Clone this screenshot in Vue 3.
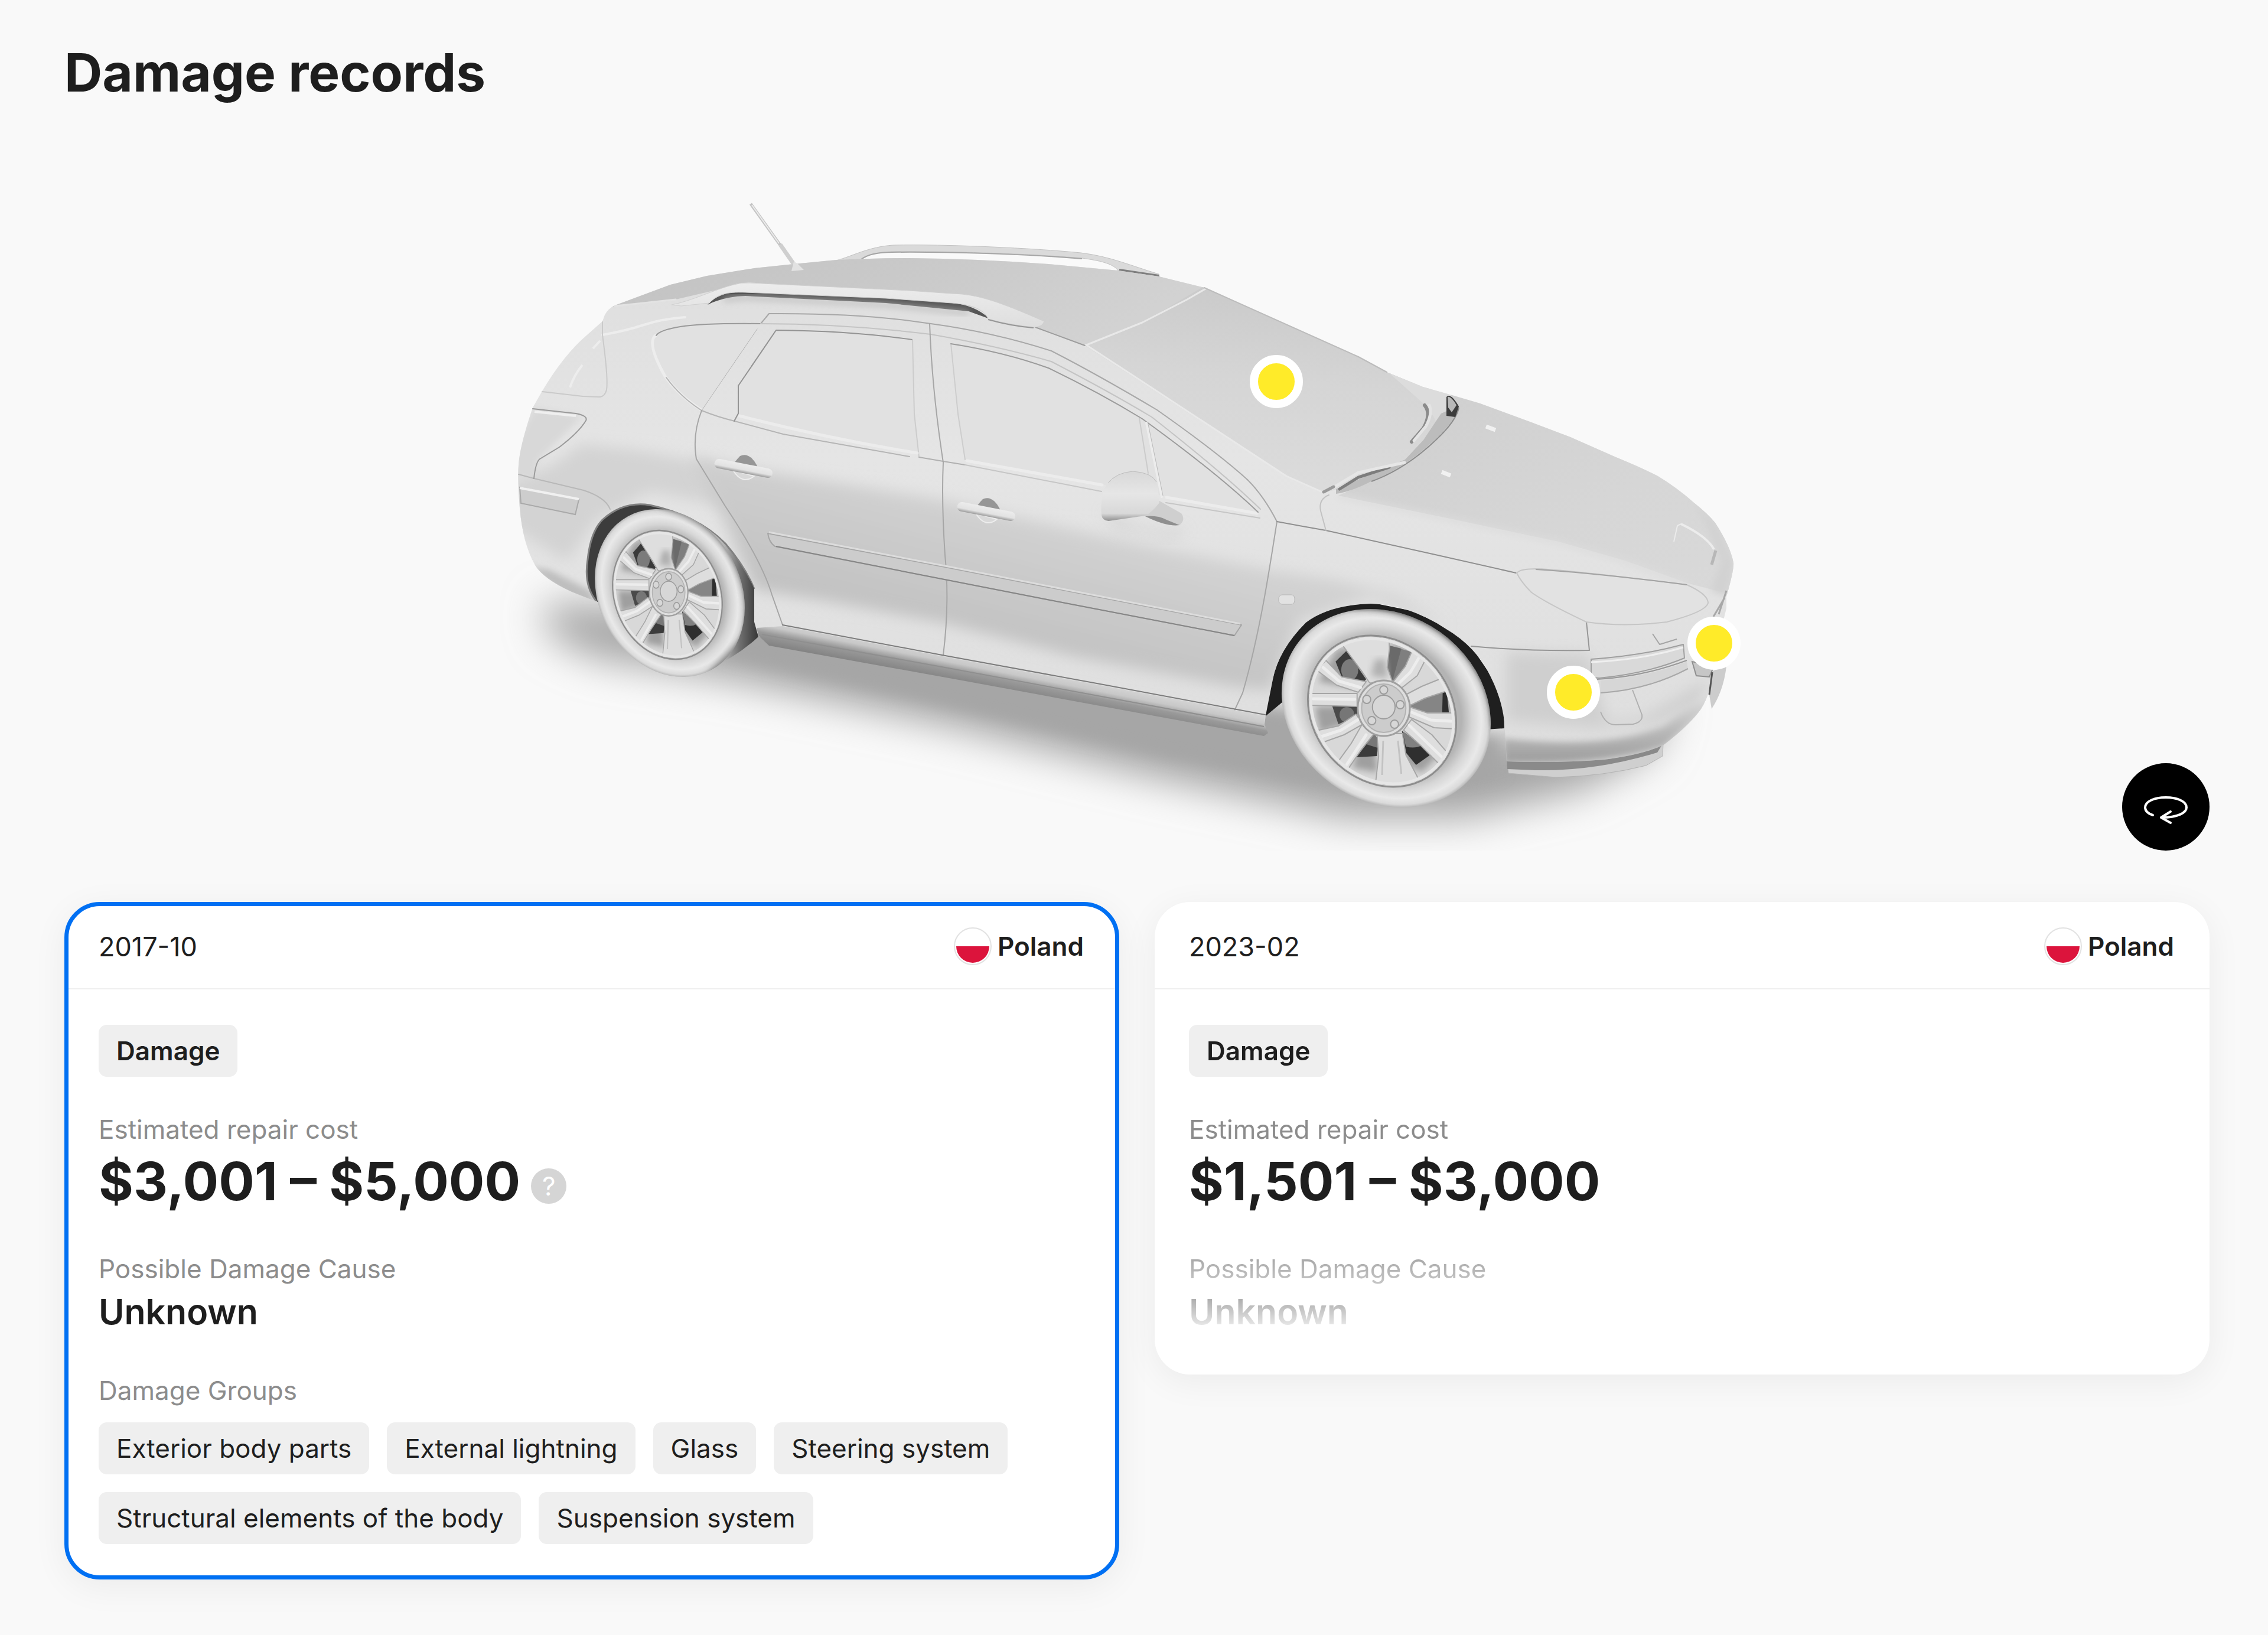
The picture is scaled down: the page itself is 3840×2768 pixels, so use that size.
<template>
  <main class="damage-page">
    <h1 class="title">Damage records</h1>

    <section class="stage" aria-label="Car model">
      <svg class="car" viewBox="109 178 3632 1262" aria-hidden="true">
        <defs>
          <linearGradient id="bodyFill" x1="0" y1="0" x2="0" y2="1">
            <stop offset="0" stop-color="#dedede" />
            <stop offset="0.4" stop-color="#e5e5e5" />
            <stop offset="1" stop-color="#dedede" />
          </linearGradient>
          <linearGradient id="roofFill" x1="0" y1="0" x2="1" y2="0.3">
            <stop offset="0" stop-color="#c2c2c2" />
            <stop offset="0.5" stop-color="#c9c9c9" />
            <stop offset="1" stop-color="#d2d2d2" />
          </linearGradient>
          <linearGradient id="screenFill" x1="0.6" y1="0" x2="0.4" y2="1">
            <stop offset="0" stop-color="#c9c9c9" />
            <stop offset="0.45" stop-color="#d5d5d5" />
            <stop offset="1" stop-color="#dcdcdc" />
          </linearGradient>
          <linearGradient id="hoodFill" x1="0" y1="0" x2="1" y2="1">
            <stop offset="0" stop-color="#cecece" />
            <stop offset="0.6" stop-color="#d6d6d6" />
            <stop offset="1" stop-color="#d9d9d9" />
          </linearGradient>
          <linearGradient id="sideFill" gradientUnits="userSpaceOnUse" x1="1700" y1="860" x2="1640" y2="1090">
            <stop offset="0" stop-color="#d2d2d2" />
            <stop offset="0.4" stop-color="#cbcbcb" />
            <stop offset="1" stop-color="#c1c1c1" />
          </linearGradient>
          <linearGradient id="sillFill" gradientUnits="userSpaceOnUse" x1="1700" y1="1122" x2="1691" y2="1168">
            <stop offset="0" stop-color="#d8d8d8" />
            <stop offset="0.35" stop-color="#c8c8c8" />
            <stop offset="0.6" stop-color="#9a9a9a" />
            <stop offset="1" stop-color="#838383" />
          </linearGradient>
          <linearGradient id="lipFill" x1="0" y1="0" x2="0" y2="1">
            <stop offset="0" stop-color="#e2e2e2" />
            <stop offset="0.5" stop-color="#bcbcbc" />
            <stop offset="1" stop-color="#9c9c9c" />
          </linearGradient>
          <linearGradient id="mirrorFill" x1="0" y1="0" x2="0" y2="1">
            <stop offset="0" stop-color="#d8d8d8" />
            <stop offset="0.45" stop-color="#e6e6e6" />
            <stop offset="0.85" stop-color="#d8d8d8" />
            <stop offset="1" stop-color="#8f8f8f" />
          </linearGradient>
          <linearGradient id="railFill" x1="0" y1="0" x2="0" y2="1">
            <stop offset="0" stop-color="#ededed" />
            <stop offset="1" stop-color="#dedede" />
          </linearGradient>
          <linearGradient id="handleFill" x1="0" y1="0" x2="0" y2="1">
            <stop offset="0" stop-color="#ececec" />
            <stop offset="0.65" stop-color="#e2e2e2" />
            <stop offset="1" stop-color="#9a9a9a" />
          </linearGradient>
          <linearGradient id="tread" gradientUnits="userSpaceOnUse" x1="1225" y1="0" x2="1282" y2="0">
            <stop offset="0" stop-color="#b5b5b5" />
            <stop offset="0.5" stop-color="#6e6e6e" />
            <stop offset="1" stop-color="#3a3a3a" />
          </linearGradient>
          <radialGradient id="tyre">
            <stop offset="0.72" stop-color="#b4b4b4" />
            <stop offset="0.82" stop-color="#d6d6d6" />
            <stop offset="0.91" stop-color="#e9e9e9" />
            <stop offset="0.97" stop-color="#dadada" />
            <stop offset="1" stop-color="#b8b8b8" />
          </radialGradient>
          <filter id="soft6" x="-20%" y="-20%" width="140%" height="140%">
            <feGaussianBlur stdDeviation="6" />
          </filter>
          <filter id="soft12" x="-20%" y="-20%" width="140%" height="140%">
            <feGaussianBlur stdDeviation="12" />
          </filter>
          <filter id="soft34" x="-20%" y="-40%" width="140%" height="180%">
            <feGaussianBlur stdDeviation="34" />
          </filter>
          <clipPath id="bodyClip">
            <path :d="bodyPath" />
          </clipPath>
          <clipPath id="rimClip">
            <ellipse rx="137" ry="117" transform="rotate(41)" />
          </clipPath>
          <clipPath id="frontTyreClip">
            <ellipse cx="2347" cy="1199" rx="186" ry="158" transform="rotate(35.5 2347 1199)" />
          </clipPath>
          <clipPath id="rearTyreClip">
            <ellipse cx="1134" cy="1004" rx="148" ry="120" transform="rotate(61.5 1134 1004)" />
          </clipPath>

          <!-- ten spoke rim, centred on 0 0 -->
          <g id="rim">
            <ellipse rx="139" ry="119" transform="rotate(41)" fill="#d8d8d8" stroke="#8d8d8d" stroke-width="3" />
            <g clip-path="url(#rimClip)">
              <g filter="url(#soft6)" fill="#9f9f9f">
                <path d="M-112 -50 L-80 -104 L-50 -110 L-30 -50 L-50 -40Z" />
                <path d="M14 -116 L66 -96 L40 -50 L14 -50Z" />
                <path d="M100 -46 L122 -30 L124 4 L60 4 L46 -18Z" />
                <path d="M36 36 L100 74 L70 104 L40 90Z" />
                <path d="M-14 44 L-8 104 L-52 96 L-44 66Z" />
                <path d="M-118 -8 L-44 -8 L-46 16 L-110 36Z" />
              </g>
              <path d="M-82 -84 L-63 -102 L-28 -54 L-35 -47 L-71 -58Z" fill="#3a3a3a" />
              <ellipse cx="-57" cy="-70" rx="15" ry="18" fill="#7b7b7b" />
              <path d="M13 -111 L57 -99 L41 -74 L22 -46 L8 -61Z" fill="#7f7f7f" />
              <path d="M13 -111 L34 -106 L18 -50 L8 -61Z" fill="#6a6a6a" />
              <path d="M107 -34 L116 3 L80 5 L48 -9Z" fill="#858585" />
              <path d="M107 -34 L114 -34 L118 4 L106 4Z" fill="#2e2e2e" />
              <path d="M35 33 L88 72 L60 91 L42 70Z" fill="#2f2f2f" />
              <path d="M36 34 L70 58 Q58 64 42 60Z" fill="#808080" />
              <path d="M-14 38 L-6 50 L-9 76 L-45 78Z" fill="#3b3b3b" />
              <path d="M-15 38 L-6 48 L-8 62 L-28 56Z" fill="#787878" />
              <path d="M-88 -9 L-42 -9 L-44 8 L-77 22Z" fill="#4a4a4a" />
              <ellipse cx="-62" cy="6" rx="13" ry="13" fill="#767676" />

              <g fill="#dedede" stroke="#a6a6a6" stroke-width="2" stroke-linejoin="round">
                <path d="M-70 -112 L-58 -122 L12 -126 L13 -106 L9 -74 L20 -46 L-22 -48 L-36 -68Z" />
                <path d="M53 -102 L78 -90 L62 -60 L30 -36 L18 -48 L41 -76Z" />
                <path d="M106 -56 L114 -34 L76 -22 L50 -10 L42 -28 L70 -42Z" />
                <path d="M46 -8 L80 3 L128 3 L130 30 L92 28 L48 10Z" />
                <path d="M52 14 L88 40 L122 78 L99 88 L68 58 L38 32Z" />
                <path d="M-9 38 L36 38 L42 74 L66 118 L-12 126 L-6 76Z" />
                <path d="M-35 22 L-14 38 L-38 67 L-60 98 L-78 86 L-54 54Z" />
                <path d="M-46 5 L-34 22 L-67 40 L-108 54 L-116 33 L-77 25Z" />
                <path d="M-44 -30 L-44 -8 L-126 -10 L-132 -30Z" />
                <path d="M-28 -50 L-42 -32 L-80 -44 L-116 -70 L-99 -86 L-71 -58Z" />
              </g>
              <g fill="none" stroke="#ededed" stroke-width="5" stroke-linecap="round">
                <path d="M-104 -74 L-76 -51 L-38 -40" />
                <path d="M-122 -21 L-48 -20" />
                <path d="M-110 44 L-72 32 L-42 14" />
                <path d="M122 17 L86 15 L50 1" />
                <path d="M108 80 L48 24" />
                <path d="M66 -92 L50 -66 L26 -44" />
                <path d="M-62 90 L-28 40" />
              </g>
              <path d="M-20 -60 L-12 -88 L6 -88 L10 -56Z" fill="#b0b0b0" filter="url(#soft6)" />
              <path d="M2 50 L0 108 M28 50 L34 106" fill="none" stroke="#c2c2c2" stroke-width="3" />
              <ellipse rx="134" ry="114" transform="rotate(41)" fill="none" stroke="#e6e6e6" stroke-width="5" />
            </g>
            <ellipse cx="3" cy="-5" rx="46" ry="47" fill="#dedede" stroke="#a0a0a0" stroke-width="3" />
            <ellipse cx="3" cy="-5" rx="39" ry="41" fill="#cccccc" stroke="#b2b2b2" stroke-width="2" />
            <g fill="#d7d7d7" stroke="#9c9c9c" stroke-width="2">
              <ellipse cx="3" cy="-7" rx="20" ry="20" />
              <circle cx="3" cy="-36" r="7" />
              <circle cx="32" cy="-11" r="7" />
              <circle cx="22" cy="22" r="7" />
              <circle cx="-18" cy="16" r="7" />
              <circle cx="-27" cy="-20" r="7" />
            </g>
          </g>
        </defs>

        <!-- ground shadow -->
        <path
          d="M920 1020 L1290 1040 L2140 1200 L2550 1250 L2830 1180 L2800 1270 L2680 1336 L2480 1384 L2280 1384 L1960 1316 L1600 1226 L1240 1150 L1010 1114 L930 1076Z"
          fill="#a3a3a3"
          filter="url(#soft34)"
        />
        <path
          d="M1240 1050 L2150 1200 L2540 1250 L2540 1310 L2330 1340 L1980 1280 L1560 1184 L1230 1110Z"
          fill="#a6a6a6"
          filter="url(#soft12)"
        />

        <!-- wheel wells -->
        <path d="M1011 1019 L990 990 L994 940 L1008 890 L1044 860 L1095 852 L1140 860 L1200 890 L1240 930 L1277 997 L1200 1040 L1060 1000Z" fill="#3c3c3c" />
        <path d="M2142 1213 L2148 1150 L2178 1090 L2212 1050 L2260 1026 L2321 1020 L2390 1034 L2450 1062 L2492 1096 L2526 1146 L2546 1200 L2547 1233 L2500 1236 L2300 1150 L2172 1188Z" fill="#1f1f1f" />

        <!-- far rail and aerial -->
        <path d="M1416 441 C1445 433 1470 418 1512 415 C1600 413 1750 420 1830 428 C1880 434 1915 450 1962 464 L1964 470 L1893 458 C1885 446 1860 441 1832 437 C1740 429 1600 425 1510 426 C1490 427 1470 430 1458 440Z" fill="#dadada" stroke="#c2c2c2" stroke-width="1" />
        <path d="M1458 439 C1470 430 1490 427 1510 427 C1600 426 1740 430 1832 438" fill="none" stroke="#a5a5a5" stroke-width="2" />
        <path d="M1895 457 L1962 467" stroke="#7f7f7f" stroke-width="4" />
        <path d="M1271 345 L1321 415" stroke="#c4c4c4" stroke-width="5" />
        <path d="M1273 347 L1319 412" stroke="#ececec" stroke-width="2" />
        <path d="M1321 414 L1346 450" stroke="#cfcfcf" stroke-width="7" />

        <!-- lower front lip -->
        <path d="M2551 1285 L2700 1285 L2816 1258 L2815 1280 L2787 1296 Q2716 1314 2634 1316 L2554 1309Z" fill="#cfcfcf" stroke="#b3b3b3" stroke-width="1" />
        <path d="M2551 1286 Q2720 1296 2816 1258 L2806 1274 Q2700 1306 2600 1304 L2552 1302Z" fill="#8a8a8a" />

        <path :d="bodyPath" fill="url(#bodyFill)" />
        <g clip-path="url(#bodyClip)">
          <!-- side panel shading -->
          <path d="M930 790 L985 752 L1080 762 L1200 784 L1240 860 L1100 832 L1010 880 L960 950 L860 890 L860 815Z" fill="#d3d3d3" filter="url(#soft12)" />
          <path
            d="M1170 774 L1309 800 L1595 846 L1912 918 L2149 965 L2260 982 L2368 1010 L2450 1060 L2320 1010 L2200 1050 L2150 1168 L2091 1162 L1823 1112 L1595 1054 L1401 1018 L1279 998 L1225 880Z"
            fill="url(#sideFill)"
            filter="url(#soft12)"
          />
          <path d="M870 760 L905 690 L985 705 L910 780 L904 812 L870 806Z" fill="#d8d8d8" filter="url(#soft6)" />
          <path d="M895 960 L960 1010 L1012 1030 L1000 1000 L930 965Z" fill="#bdbdbd" filter="url(#soft6)" />

          <!-- roof, windscreen, bonnet -->
          <path d="M1030 520 L1135 478 L1277 448 L1416 434 L1600 430 L1893 450 L2043 484 L1934 546 L1837 585 L1753 554 L1600 505 L1268 478 L1144 507 L1041 519Z" fill="url(#roofFill)" />
          <path d="M2040 484 L2300 600 L2420 655 L2455 700 L2400 775 L2330 812 L2241 834 L2178 807 L2010 698 L1934 648 L1837 585 L1934 546Z" fill="url(#screenFill)" />
          <path d="M2348 628 L2420 692 L2445 740 L2470 690 L2450 664 L2409 652Z" fill="#dcdcdc" />
          <path d="M2455 664 L2600 712 L2740 770 L2810 802 L2872 850 L2908 885 L2940 955 L2925 1005 L2856 987 L2751 949 L2639 917 L2455 878 L2266 839 L2340 806 L2400 765 L2440 730 L2466 700Z" fill="url(#hoodFill)" />
          <path d="M2266 840 L2455 879 L2639 918 L2751 950 L2860 990" fill="none" stroke="#dcdcdc" stroke-width="8" filter="url(#soft6)" />
          <path d="M2868 851 L2904 885 L2935 953 L2923 1010 L2896 1000 L2915 950 L2890 890Z" fill="#d2d2d2" filter="url(#soft6)" />
          <path d="M2470 687 Q2474 700 2432 742 Q2379 792 2327 812 Q2290 832 2262 836 L2262 828 L2379 778 L2410 745 L2440 700Z" fill="#bcbcbc" />
          <path d="M2470 690 Q2466 712 2432 744 Q2380 794 2322 815" fill="none" stroke="#8c8c8c" stroke-width="2" />

          <!-- front bumper -->
          <path d="M2551 1104 L2690 1108 L2708 1175 L2720 1222 L2780 1216 L2890 1150 L2880 1190 L2800 1226 L2700 1232 L2551 1220Z" fill="#cfcfcf" filter="url(#soft12)" />
          <path d="M2545 1250 Q2716 1270 2816 1230 L2895 1170 L2890 1200 L2817 1264 Q2716 1296 2545 1292Z" fill="url(#lipFill)" filter="url(#soft6)" />
        </g>

        <!-- roof edges -->
        <g fill="none" stroke-linecap="round" stroke-linejoin="round">
          <path d="M2041 489 L2010 507 L1934 546 L1837 585" stroke="#e8e8e8" stroke-width="3" />
          <path d="M1753 554 L1837 585" stroke="#9d9d9d" stroke-width="2" />
          <path d="M1839 584 L1934 646 L2010 696 L2178 806 L2241 834" stroke="#e9e9e9" stroke-width="3" />
          <path d="M1041 518 L1080 514 L1144 507" stroke="#e3e3e3" stroke-width="3" />
          <path d="M2039 487 L2300 604 L2348 630" stroke="#bcbcbc" stroke-width="2" />
          <path d="M1020 567 Q1060 560 1090 550 T1160 537" stroke="#ededed" stroke-width="4" />
        </g>
        <path d="M1340 459 L1344 443 L1350 446 L1361 457Z" fill="#e2e2e2" />

        <!-- near rail -->
        <path d="M1198 516 Q1215 495 1262 492 L1500 504 L1612 513 Q1650 516 1676 540 L1640 527 L1500 513 L1262 501 Q1225 502 1198 516Z" fill="#555555" />
        <path d="M1225 508 L1262 504 L1500 516 L1640 530" fill="none" stroke="#b9b9b9" stroke-width="6" filter="url(#soft6)" />
        <path d="M1137 516 C1170 510 1210 490 1242 482 Q1255 478 1270 479 L1540 492 L1612 497 C1655 498 1690 510 1768 544 Q1765 554 1750 554 Q1710 550 1673 540 C1668 526 1650 516 1612 513 L1500 505 L1262 495 C1230 494 1215 498 1201 513 L1153 518Z" fill="url(#railFill)" stroke="#cfcfcf" stroke-width="1" />
        <path d="M1673 541 Q1712 552 1750 555" fill="none" stroke="#969696" stroke-width="2" />

        <!-- side glass -->
        <g fill="#e1e1e1" stroke-linejoin="round">
          <path d="M1110 568 Q1113 560 1152 553 Q1190 547 1288 549 L1188 695 Q1150 670 1126 637 Q1090 580 1110 568Z" />
          <path d="M1314 559 Q1440 560 1545 575 L1548 701 L1554 766 Q1400 740 1250 703 L1250 653Z" />
          <path d="M1610 582 Q1700 596 1775 623 Q1860 664 1934 709 Q2060 800 2130 867 L1969 839 L1635 778 L1622 701Z" />
        </g>
        <g fill="none" stroke-linecap="round" stroke-linejoin="round">
          <path d="M1110 568 Q1094 580 1126 637 Q1150 670 1186 693" stroke="#ededed" stroke-width="5" />
          <path d="M1111 568 Q1116 559 1152 553 Q1190 547 1288 548" stroke="#9a9a9a" stroke-width="2" />
          <path d="M1128 639 Q1152 672 1188 695 Q1215 706 1244 713 L1326 735 L1540 773" stroke="#b5b5b5" stroke-width="2" />
          <path d="M1288 548 L1302 531 Q1440 530 1540 543 L1576 548 Q1680 562 1780 594 Q1860 635 1959 694 Q2060 765 2112 812 Q2140 840 2162 883" stroke="#a8a8a8" stroke-width="2" />
          <path d="M1288 548 Q1430 548 1576 566 Q1690 586 1780 612 Q1880 664 1950 706 Q2070 800 2134 862" stroke="#c4c4c4" stroke-width="2" />
          <path d="M1188 695 L1282 557" stroke="#b3b3b3" stroke-width="1" />
          <path d="M1243 713 L1250 700 L1250 653 L1314 559 Q1440 560 1545 575" stroke="#939393" stroke-width="2" />
          <path d="M1545 575 L1548 701 L1556 774" stroke="#cccccc" stroke-width="2" />
          <path d="M1556 774 L1597 781 L1634 787" stroke="#b0b0b0" stroke-width="2" />
          <path d="M1252 704 Q1400 742 1553 767" stroke="#ececec" stroke-width="5" />
          <path d="M1637 780 L1866 821 M1975 842 L2128 869" stroke="#ececec" stroke-width="5" />
          <path d="M1634 787 L1865 832 M1974 851 L2133 877" stroke="#c6c6c6" stroke-width="2" />
          <path d="M1610 582 L1622 701 L1634 778" stroke="#cdcdcd" stroke-width="2" />
          <path d="M1610 582 Q1700 596 1775 623 Q1860 664 1934 709 Q2060 800 2130 867" stroke="#9b9b9b" stroke-width="2" />
          <path d="M1929 708 L1944 801" stroke="#cbcbcb" stroke-width="2" />
          <path d="M1941 716 L1967 841" stroke="#ececec" stroke-width="4" />
          <path d="M1944 718 L1969 839" stroke="#bababa" stroke-width="1" />
        </g>

        <!-- panel gaps -->
        <g fill="none" stroke="#a6a6a6" stroke-width="2" stroke-linecap="round" stroke-linejoin="round">
          <path d="M1188 695 Q1172 735 1179 777 L1228 857 Q1290 950 1307 1007 L1325 1058" />
          <path d="M1574 548 Q1578 660 1597 783 Q1594 850 1600 940 Q1608 1020 1597 1109" />
          <path d="M2162 883 Q2150 960 2142 1005 Q2125 1100 2104 1173 L2090 1203" />
          <path d="M2162 883 L2200 890 L2245 898 L2430 939 L2567 970" stroke="#8f8f8f" />
          <path d="M2250 838 Q2232 845 2236 865 L2245 898" stroke="#c2c2c2" />
          <path d="M1325 1058 L1595 1109 L1868 1159 L2142 1210" stroke="#7c7c7c" />
          <path d="M2491 1094 Q2588 1103 2691 1101 L2686 1053" stroke="#969696" />
          <path d="M878 803 L904 810 L988 830 Q1025 842 1033 862" stroke="#b8b8b8" />
          <path d="M1020 545 L1020 567 Q1030 640 1027 660 Q1024 672 1014 672 L987 671 L918 663" stroke="#cacaca" />
          <path d="M902 692 L975 700 Q996 704 992 712 Q980 732 947 757 L914 777 Q907 782 904 810" stroke="#9a9a9a" />
        </g>
        <path d="M905 697 L975 704" stroke="#efefef" stroke-width="4" />
        <path d="M965 656 Q972 635 986 618 M1004 590 L1016 577" fill="none" stroke="#ededed" stroke-width="4" />
        <path d="M880 825 L980 846 L974 871 L882 852Z" fill="#cdcdcd" stroke="#a9a9a9" stroke-width="2" />
        <path d="M880 826 L980 845" stroke="#f0f0f0" stroke-width="4" />

        <!-- sill -->
        <path d="M1281 1063 L1325 1060 L1595 1111 L1868 1161 L2142 1212 L2141 1226 L2147 1241 L2140 1246 L1640 1154 L1302 1093 L1284 1076Z" fill="url(#sillFill)" />
        <path d="M1290 1074 L1600 1130 L2140 1230" fill="none" stroke="#8f8f8f" stroke-width="2" />

        <!-- door moulding -->
        <path d="M1300 903 L1600 960 L2102 1058 L2090 1076 L1778 1016 L1312 925 Q1302 918 1300 903Z" fill="#cccccc" stroke="#a6a6a6" stroke-width="2" stroke-linejoin="round" />
        <path d="M1302 901 L1600 958 L2100 1056" fill="none" stroke="#dcdcdc" stroke-width="3" />
        <path d="M1314 925 L1778 1016 L2090 1076" fill="none" stroke="#868686" stroke-width="2" />
        <rect x="2165" y="1007" width="27" height="16" rx="6" fill="#e2e2e2" stroke="#b4b4b4" stroke-width="1" />

        <!-- handles -->
        <g v-for="handle in handles" :key="handle.x" :transform="`translate(${handle.x} ${handle.y})`">
          <path d="M-20 0 Q-16 -10 -6 -20 Q4 -25 14 -16 Q24 -6 26 8Z" fill="#969696" />
          <path d="M-18 4 Q-2 30 18 14Z" fill="#d9d9d9" stroke="#ededed" stroke-width="2" />
          <rect x="-50" y="-7" width="100" height="16" rx="8" fill="url(#handleFill)" transform="rotate(11)" />
        </g>

        <!-- door mirror -->
        <path d="M1865 860 Q1930 910 2010 895 L1990 912 L1890 896Z" fill="#c8c8c8" filter="url(#soft12)" opacity="0.6" />
        <path d="M1930 852 L1963 848 L2000 869 Q2008 880 1997 889 Q1975 892 1939 874Z" fill="#cfcfcf" />
        <path d="M1939 874 Q1960 872 1975 880 L1997 889 Q1975 892 1939 874Z" fill="#8f8f8f" />
        <path d="M1865 872 Q1862 835 1876 818 Q1890 800 1918 798 Q1950 800 1958 816 Q1962 835 1963 851 Q1950 868 1939 873 L1877 882 Q1866 881 1865 872Z" fill="url(#mirrorFill)" />
        <path d="M1876 818 Q1890 800 1918 798 Q1950 800 1958 816" fill="none" stroke="#bdbdbd" stroke-width="1" />

        <!-- wipers and far mirror -->
        <g fill="none" stroke-linecap="round">
          <path d="M2268 828 L2300 808 L2352 791" stroke="#7d7d7d" stroke-width="5" />
          <path d="M2260 824 L2300 800 L2378 783" stroke="#e6e6e6" stroke-width="5" />
          <path d="M2241 833 L2258 824" stroke="#9a9a9a" stroke-width="5" />
          <path d="M2412 686 Q2424 700 2410 725 L2390 748" stroke="#8b8b8b" stroke-width="6" />
          <path d="M2420 686 Q2426 700 2414 722 L2394 746" stroke="#e4e4e4" stroke-width="5" />
        </g>
        <path d="M2449 672 Q2456 664 2470 688 L2464 706 L2449 704Z" fill="#3b3b3b" />
        <path d="M2451 672 Q2457 670 2466 686 L2458 698 L2452 690Z" fill="#b8b8b8" />
        <path d="M2516 722 L2532 728 M2441 799 L2456 805" stroke="#f1f1f1" stroke-width="7" />

        <!-- headlamp, badge, grille -->
        <g fill="none" stroke="#c6c6c6" stroke-width="2" stroke-linejoin="round">
          <path d="M2568 970 Q2574 963 2600 963 Q2640 963 2856 990 Q2892 1006 2892 1021 Q2888 1036 2822 1053 Q2750 1062 2686 1053 Q2620 1022 2593 1003 Q2575 985 2568 970Z" fill="#e2e2e2" />
          <path d="M2600 964 Q2700 970 2856 990" stroke="#a3a3a3" />
          <path d="M2834 917 L2840 890 L2846 887" stroke="#ebebeb" />
          <path d="M2846 887 Q2890 908 2902 930" stroke="#ececec" stroke-width="4" />
          <path d="M2905 932 L2898 956" stroke="#b7b7b7" stroke-width="5" />
          <path d="M2694 1116 Q2780 1110 2850 1091 L2852 1114 Q2790 1140 2708 1148 L2694 1147Z" fill="#d9d9d9" stroke="#9f9f9f" />
          <path d="M2694 1121 Q2780 1117 2850 1096" stroke="#efefef" stroke-width="3" />
          <path d="M2710 1152 Q2790 1146 2856 1120 L2858 1132 Q2790 1166 2710 1173Z" fill="#d6d6d6" stroke="none" />
          <path d="M2710 1173 Q2790 1168 2858 1132" stroke="#a8a8a8" />
          <path d="M2704 1150 Q2780 1146 2856 1118" stroke="#999999" />
          <path d="M2710 1205 Q2718 1227 2735 1227 L2765 1226 Q2782 1222 2780 1210 L2764 1168" stroke="#b0b0b0" />
          <path d="M2798 1073 L2810 1091 L2839 1082" stroke="#a5a5a5" />
        </g>
        <path d="M2910 1040 L2923 1000 M2901 1044 L2920 1012" stroke="#a8a8a8" stroke-width="3" />
        <path d="M2865 1120 L2872 1144 L2894 1146 L2902 1128Z" fill="#c6c6c6" stroke="#8f8f8f" stroke-width="2" />
        <path d="M2899 1136 L2894 1176 L2898 1200 Q2918 1170 2923 1128Z" fill="#cccccc" />
        <path d="M2899 1138 L2894 1176" stroke="#555555" stroke-width="3" />

        <!-- arch lips -->
        <path d="M1009 1017 Q988 990 995 947 Q1000 900 1020 880 Q1055 848 1100 855 Q1180 872 1228 920 Q1262 960 1277 997" fill="none" stroke="#808080" stroke-width="3" />

        <!-- rear wheel -->
        <path d="M1110 862 Q1180 870 1228 922 Q1262 962 1277 997 L1277 1053 L1284 1078 Q1250 1110 1202 1132 L1149 1144Z" fill="url(#tread)" />
        <ellipse cx="1134" cy="1004" rx="148" ry="120" transform="rotate(61.5 1134 1004)" fill="url(#tyre)" />
        <g clip-path="url(#rearTyreClip)">
          <path d="M1120 850 Q1212 878 1244 940 Q1282 1010 1268 1080 L1206 1144" fill="none" stroke="#868686" stroke-width="16" filter="url(#soft6)" />
        </g>
        <use href="#rim" transform="translate(1130 1007) scale(0.71 0.852)" />

        <!-- front wheel -->
        <ellipse cx="2347" cy="1199" rx="186" ry="158" transform="rotate(35.5 2347 1199)" fill="url(#tyre)" />
        <g clip-path="url(#frontTyreClip)">
          <path d="M2290 1020 Q2402 1018 2474 1088 Q2534 1150 2536 1230" fill="none" stroke="#4a4a4a" stroke-width="18" filter="url(#soft6)" />
        </g>
        <use href="#rim" transform="translate(2340 1204) scale(0.96 1)" />
      </svg>

      <button
        v-for="pin in pins"
        :key="pin.label"
        class="pin"
        type="button"
        :aria-label="pin.label"
        :style="{ left: pin.left + '%', top: pin.top + '%' }"
      ></button>

      <button class="rotate" type="button" aria-label="Rotate car">
        <svg viewBox="0 0 148 148" fill="none" stroke="#fff" stroke-width="4" stroke-linecap="round" stroke-linejoin="round">
          <path d="M52 88 C43 85 39 80 39 75 C39 65 54 58 74 58 C94 58 109 65 109 75 C109 84 94 92 67 92" />
          <path d="M82 82 L66 92 L82 101" />
        </svg>
      </button>
    </section>

    <section class="cards">
      <article
        v-for="(record, index) in records"
        :key="record.date"
        class="card"
        :class="{ active: index === selected, collapsed: index !== selected }"
        @click="selected = index"
      >
        <header class="card-header">
          <time class="date">{{ record.date }}</time>
          <span class="country">
            <span class="flag"><span class="flag-inner"></span></span>
            {{ record.country }}
          </span>
        </header>
        <div class="card-body">
          <span class="tag tag-strong">{{ record.type }}</span>
          <div class="field">
            <p class="label">Estimated repair cost</p>
            <p class="cost">
              {{ record.cost }}
              <button v-if="index === selected" class="help" type="button" aria-label="About repair cost">?</button>
            </p>
          </div>
          <div class="field">
            <p class="label">Possible Damage Cause</p>
            <p class="cause">{{ record.cause }}</p>
          </div>
          <div v-if="record.groups.length" class="field">
            <p class="label">Damage Groups</p>
            <ul class="groups">
              <li v-for="group in record.groups" :key="group" class="tag">{{ group }}</li>
            </ul>
          </div>
        </div>
      </article>
    </section>
  </main>
</template>

<script setup>
import { ref } from 'vue';

const selected = ref(0);

// car outline with both wheel arches cut out
const bodyPath =
  'M1020 544 L1024 533 Q1030 522 1041 517 L1135 482 L1197 467 L1277 454 L1344 447 L1416 440 Q1480 437 1540 437 ' +
  'Q1653 438 1775 447 L1893 458 L1962 468 L2039 487 L2300 604 L2348 630 L2409 655 L2455 668 L2506 683 L2593 715 ' +
  'L2659 740 L2736 774 Q2780 792 2807 806 Q2840 826 2868 851 Q2892 870 2904 885 Q2930 925 2935 953 ' +
  'Q2936 965 2923 1010 L2923 1030 L2918 1050 L2900 1130 L2892 1175 Q2885 1195 2875 1207 Q2855 1232 2817 1261 ' +
  'Q2780 1278 2716 1286 Q2640 1292 2551 1289 L2548 1234 Q2546 1190 2524 1146 Q2500 1095 2447 1064 ' +
  'Q2387 1024 2321 1022 Q2250 1024 2211 1054 Q2165 1100 2155 1150 L2143 1211 L2141 1226 L1640 1140 L1302 1085 ' +
  'L1284 1077 L1277 1053 L1277 997 Q1262 960 1228 920 Q1180 872 1100 855 Q1055 848 1020 880 Q1000 900 995 947 ' +
  'Q988 990 1011 1019 L968 1002 Q920 980 906 957 Q885 920 880 860 Q876 810 878 787 Q880 755 902 690 L918 662 ' +
  'Q955 600 994 567Z';

const handles = [
  { x: 1259, y: 792 },
  { x: 1670, y: 865 },
];

const pins = [
  { label: 'Glass', left: 56.5, top: 37.1 },
  { label: 'Front bumper', left: 76.9, top: 72.2 },
  { label: 'External lightning', left: 70.35, top: 78.8 },
];

const records = [
  {
    date: '2017-10',
    country: 'Poland',
    type: 'Damage',
    cost: '$3,001 – $5,000',
    cause: 'Unknown',
    groups: [
      'Exterior body parts',
      'External lightning',
      'Glass',
      'Steering system',
      'Structural elements of the body',
      'Suspension system',
    ],
  },
  {
    date: '2023-02',
    country: 'Poland',
    type: 'Damage',
    cost: '$1,501 – $3,000',
    cause: 'Unknown',
    groups: [],
  },
];
</script>

<style>
body {
  background: #f9f9f9;
}
</style>

<style scoped>
.damage-page {
  box-sizing: border-box;
  padding: 68px 99px 94px 109px;
  font-family: Inter, 'Liberation Sans', sans-serif;
  font-size: 44px;
  color: #1e1e1e;
}

.title {
  margin: 0;
  font-size: 89px;
  line-height: 110px;
  font-weight: 700;
}

/* car viewer */
.stage {
  position: relative;
}

.car {
  display: block;
  width: 100%;
}

.pin {
  position: absolute;
  box-sizing: border-box;
  width: 90px;
  height: 90px;
  padding: 0;
  border: 14px solid #fff;
  border-radius: 50%;
  background: #ffeb29;
  transform: translate(-50%, -50%);
  cursor: pointer;
}

.rotate {
  position: absolute;
  right: 0;
  bottom: 0;
  width: 148px;
  height: 148px;
  padding: 0;
  border: 0;
  border-radius: 50%;
  background: #000;
  cursor: pointer;
}

.rotate svg {
  display: block;
}

/* record cards */
.cards {
  display: grid;
  grid-template-columns: 1fr 1fr;
  align-items: start;
  gap: 60px;
  margin-top: 87px;
}

.card {
  position: relative;
  border-radius: 60px;
  background: #fff;
  box-shadow: 0 12px 60px rgba(0, 0, 0, 0.06);
}

.card.active::after {
  content: '';
  position: absolute;
  inset: 0;
  border: 7px solid #0070f3;
  border-radius: 60px;
  pointer-events: none;
}

.card-header {
  display: flex;
  align-items: center;
  justify-content: space-between;
  box-sizing: border-box;
  height: 148px;
  padding: 4px 60px 0 58px;
  border-bottom: 2px solid #efefef;
}

.date {
  font-size: 45px;
}

.country {
  display: flex;
  align-items: center;
  gap: 10px;
  font-weight: 600;
}

.flag {
  box-sizing: border-box;
  width: 64px;
  height: 64px;
  padding: 2px;
  border: 2px solid #e2e2e2;
  border-radius: 50%;
}

.flag-inner {
  display: block;
  height: 100%;
  border-radius: 50%;
  background: linear-gradient(#fff 50%, #dc143c 50%);
}

.card-body {
  display: flex;
  flex-direction: column;
  align-items: flex-start;
  gap: 60px;
  padding: 60px 58px;
}

/* inactive cards fade out towards the bottom */
.collapsed .card-body {
  padding-bottom: 62px;
  mask-image: linear-gradient(#000 calc(100% - 242px), rgba(0, 0, 0, 0.1) calc(100% - 82px));
}

.tag {
  padding: 0 30px;
  border-radius: 14px;
  background: #efefef;
  line-height: 88px;
}

.tag-strong {
  font-weight: 600;
}

.label,
.cost,
.cause {
  margin: 0;
}

.label {
  line-height: 58px;
  color: #8c8c8c;
}

.cost {
  display: flex;
  align-items: center;
  gap: 18px;
  font-size: 90px;
  line-height: 118px;
  font-weight: 700;
}

.help {
  width: 60px;
  height: 60px;
  margin-top: 16px;
  padding: 0;
  border: 0;
  border-radius: 50%;
  background: #d5d5d5;
  color: #fff;
  font-family: inherit;
  font-size: 44px;
  line-height: 60px;
  font-weight: 400;
}

.cause {
  font-size: 59px;
  line-height: 88px;
  font-weight: 600;
}

.groups {
  display: flex;
  flex-wrap: wrap;
  gap: 30px;
  margin: 25px 0 0;
  padding: 0;
  list-style: none;
}
</style>
